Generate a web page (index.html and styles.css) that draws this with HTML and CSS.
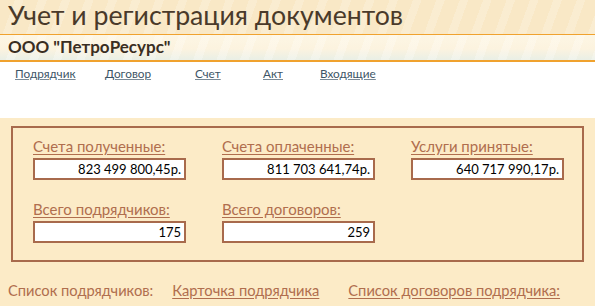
FILE: index.html
```html
<!DOCTYPE html>
<html lang="ru">
<head>
<meta charset="utf-8">
<link rel="stylesheet" href="styles.css">
</head>
<body>
<header class="header">
  <div class="title">Учет и регистрация документов</div>
  <div class="company">ООО "ПетроРесурс"</div>
</header>
<nav class="nav">
  <a class="nav-link l1" href="#">Подрядчик</a>
  <a class="nav-link l2" href="#">Договор</a>
  <a class="nav-link l3" href="#">Счет</a>
  <a class="nav-link l4" href="#">Акт</a>
  <a class="nav-link l5" href="#">Входящие</a>
</nav>
<main class="main">
  <section class="box">
    <div class="field">
      <a class="label" href="#">Счета полученные:</a>
      <div class="value">823 499 800,45р.</div>
    </div>
    <div class="field">
      <a class="label" href="#">Счета оплаченные:</a>
      <div class="value">811 703 641,74р.</div>
    </div>
    <div class="field">
      <a class="label" href="#">Услуги принятые:</a>
      <div class="value">640 717 990,17р.</div>
    </div>
    <div class="field">
      <a class="label" href="#">Всего подрядчиков:</a>
      <div class="value">175</div>
    </div>
    <div class="field">
      <a class="label" href="#">Всего договоров:</a>
      <div class="value">259</div>
    </div>
  </section>
  <div class="footer">
    <span class="foot-text">Список подрядчиков:</span>
    <a class="foot-link fl1" href="#">Карточка подрядчика</a>
    <a class="foot-link fl2" href="#">Список договоров подрядчика:</a>
  </div>
</main>
</body>
</html>
```
FILE: styles.css
```css
html, body {
  margin: 0;
  padding: 0;
}
body {
  width: 595px;
  height: 306px;
  overflow: hidden;
  background: #fcebc7;
  font-family: Lato, "Open Sans", sans-serif;
}
.header {
  background:
    repeating-linear-gradient(110deg, rgba(255,255,255,0) 0 14px, rgba(255,255,255,0.2) 14px 22px),
    #f9e8c6;
}
.title {
  height: 35px;
  box-sizing: border-box;
  padding-left: 8px;
  font-size: 26.7px;
  line-height: 31px;
  color: #4a3a2a;
  border-bottom: 1px solid #f0a22e;
}
.company {
  height: 27px;
  box-sizing: border-box;
  padding-left: 8px;
  font-size: 17px;
  font-weight: bold;
  line-height: 24px;
  color: #3a2e22;
  border-bottom: 2px solid #f0a22e;
  background:
    repeating-linear-gradient(110deg, rgba(255,255,255,0) 0 14px, rgba(255,255,255,0.25) 14px 22px),
    linear-gradient(#fdf6e4 0%, #fcf3df 55%, #e9efe6 100%);
}
.nav {
  height: 56px;
  background: #ffffff;
  position: relative;
}
.nav-link {
  position: absolute;
  top: 4px;
  font-size: 11.8px;
  color: #3d5566;
  text-decoration: underline;
  text-decoration-color: #7a8a96;
}
.l1 { left: 15px; }
.l2 { left: 105px; }
.l3 { left: 195px; }
.l4 { left: 263px; }
.l5 { left: 320px; }
.main {
  padding: 8px 11px 0 11px;
}
.box {
  height: 136px;
  box-sizing: border-box;
  border: 2px solid #a86a4c;
  padding: 9px 0 0 20px;
  display: grid;
  grid-template-columns: repeat(3, 153px);
  column-gap: 36px;
  row-gap: 20px;
  align-content: start;
}
.field {
  display: flex;
  flex-direction: column;
  align-items: flex-start;
}
.label {
  font-size: 15px;
  line-height: 18px;
  color: #b06e4e;
  text-decoration: underline;
  text-underline-offset: 2px;
  margin-bottom: 3px;
  white-space: nowrap;
}
.value {
  width: 153px;
  height: 22px;
  box-sizing: border-box;
  border: 2px solid #a86a4c;
  background: #ffffff;
  text-align: right;
  padding-right: 3px;
  font-size: 13px;
  line-height: 18px;
  color: #000000;
}
.footer {
  display: flex;
  align-items: baseline;
  padding-top: 19px;
  margin-left: -3px;
  white-space: nowrap;
}
.foot-text,
.foot-link {
  flex: none;
  font-size: 14.7px;
  color: #b06e4e;
}
.foot-link {
  text-decoration: underline;
  text-underline-offset: 2px;
}
.fl1 { margin-left: 19px; }
.fl2 { margin-left: 29px; }
```
